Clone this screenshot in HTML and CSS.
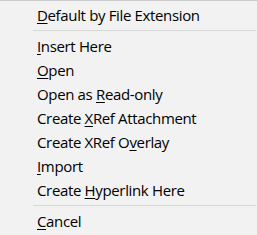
FILE: index.html
```html
<!DOCTYPE html>
<html lang="en">

<head>
    <meta charset="UTF-8">
    <meta name="viewport" content="width=device-width, initial-scale=1.0">
    <title>Drop menu</title>
    <link rel="stylesheet" href="styles.css">
</head>

<body>
    <div class="menu">
        <div class="item"><u>D</u>efault by File Extension</div>
        <div class="sep"></div>
        <div class="item"><u>I</u>nsert Here</div>
        <div class="item"><u>O</u>pen</div>
        <div class="item">Open as <u>R</u>ead-only</div>
        <div class="item">Create <u>X</u>Ref Attachment</div>
        <div class="item">Create XRef O<u>v</u>erlay</div>
        <div class="item"><u>I</u>mport</div>
        <div class="item">Create <u>H</u>yperlink Here</div>
        <div class="sep"></div>
        <div class="item"><u>C</u>ancel</div>
    </div>
</body>

</html>
```
FILE: styles.css
```css
* {
    margin: 0;
    padding: 0;
    box-sizing: border-box;
}

body {
    background-color: #f2f2f2;
    font-family: "Open Sans", "Liberation Sans", sans-serif;
    font-size: 15px;
    letter-spacing: -0.35px;
    color: #000;
}

.menu {
    width: 257px;
    height: 235px;
    border-top: 1px solid #cccccc;
    padding-top: 2px;
}

.item {
    height: 24px;
    line-height: 24px;
    padding-left: 37px;
    white-space: nowrap;
}

.item u {
    text-decoration-thickness: 1px;
    text-underline-offset: 2px;
}

.sep {
    height: 1px;
    margin: 3px 1px 3px 33px;
    background-color: #d7d7d7;
}
```
